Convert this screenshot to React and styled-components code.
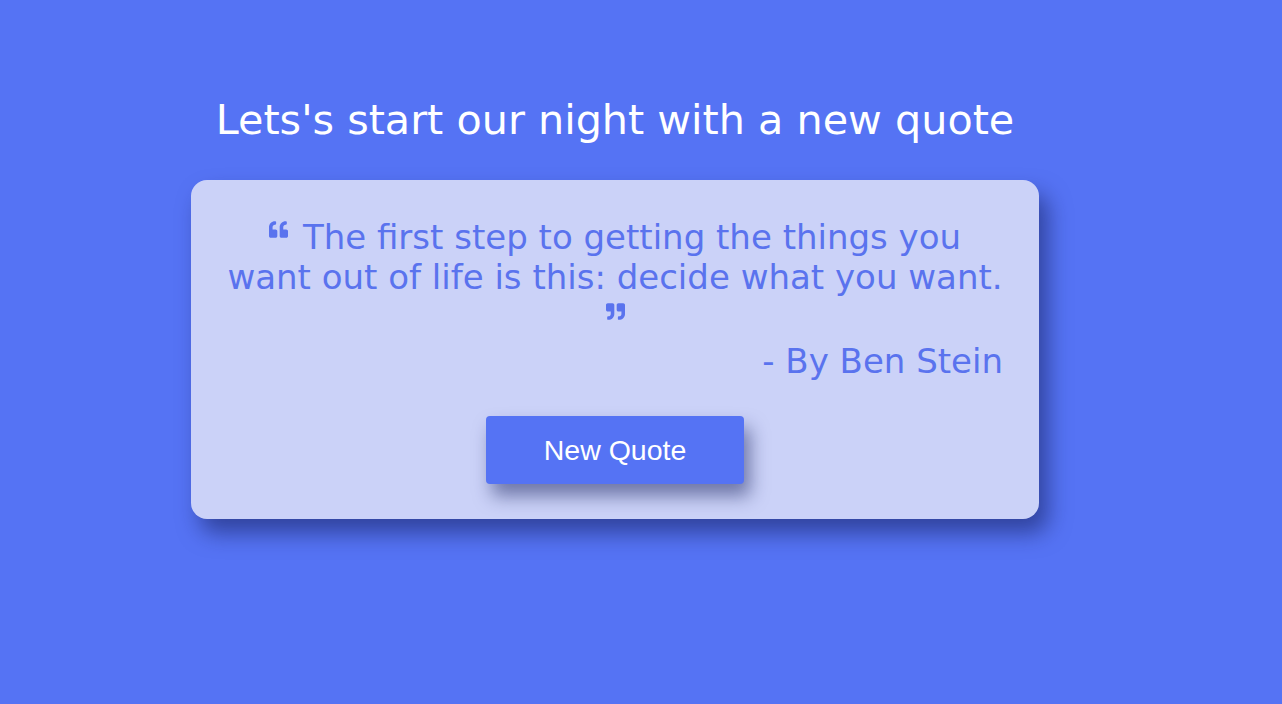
import styled, { createGlobalStyle } from "styled-components";
import { FaQuoteLeft, FaQuoteRight } from "react-icons/fa";

const GlobalStyle = createGlobalStyle`
    html, body {
        margin: 0;
        padding: 0;
        background: #5573f4;
    }
    body {
        font-family: "DejaVu Sans", "Open Sans", sans-serif;
    }
`;

const Page = styled.div`
    width: 100vw;
    height: 100vh;
    background: #5573f4;
    box-sizing: border-box;
    padding: 95px 0 0 191px;
`;

const Wrapper = styled.div`
    width: 848px;
    display: flex;
    flex-direction: column;
    align-items: center;
`;

const Title = styled.h1`
    margin: 0 0 35px;
    font-size: 41.3px;
    line-height: 50px;
    font-weight: 400;
    color: #ffffff;
    text-align: center;
    white-space: nowrap;
`;

const Card = styled.div`
    width: 100%;
    box-sizing: border-box;
    padding: 37px 36px 35px;
    background-color: #cbd2f8;
    border-radius: 16px;
    box-shadow: 9px 14px 22px rgba(20, 30, 90, 0.55);
    display: flex;
    flex-direction: column;
    align-items: center;
`;

const Quote = styled.p`
    margin: 0;
    width: 100%;
    font-size: 34px;
    line-height: 40px;
    color: #5a73ee;
    text-align: center;
`;

const Mark = styled.span`
    display: inline-block;
    font-size: 19px;
    line-height: 1;
    vertical-align: ${(p) => (p.$close ? "8px" : "10px")};
    margin-right: ${(p) => (p.$close ? "0" : "15px")};
`;

const Author = styled.p`
    margin: 4px 0 0;
    width: 100%;
    font-size: 34px;
    line-height: 40px;
    color: #5a73ee;
    text-align: right;
`;

const Button = styled.button`
    margin-top: 35px;
    width: 258px;
    height: 68px;
    border: none;
    border-radius: 4px;
    background-color: #5573f4;
    color: #ffffff;
    font-family: "Liberation Sans", Arial, sans-serif;
    font-size: 28.5px;
    cursor: pointer;
    box-shadow: 6px 12px 18px rgba(20, 30, 90, 0.5);
`;

const App = () => {
    return (
        <Page>
            <GlobalStyle />
            <Wrapper>
                <Title>Lets's start our night with a new quote</Title>
                <Card>
                    <Quote>
                        <Mark>
                            <FaQuoteLeft />
                        </Mark>
                        The first step to getting the things you
                        <br />
                        want out of life is this: decide what you want.
                        <br />
                        <Mark $close>
                            <FaQuoteRight />
                        </Mark>
                    </Quote>
                    <Author>- By Ben Stein</Author>
                    <Button>New Quote</Button>
                </Card>
            </Wrapper>
        </Page>
    );
};

export default App;
